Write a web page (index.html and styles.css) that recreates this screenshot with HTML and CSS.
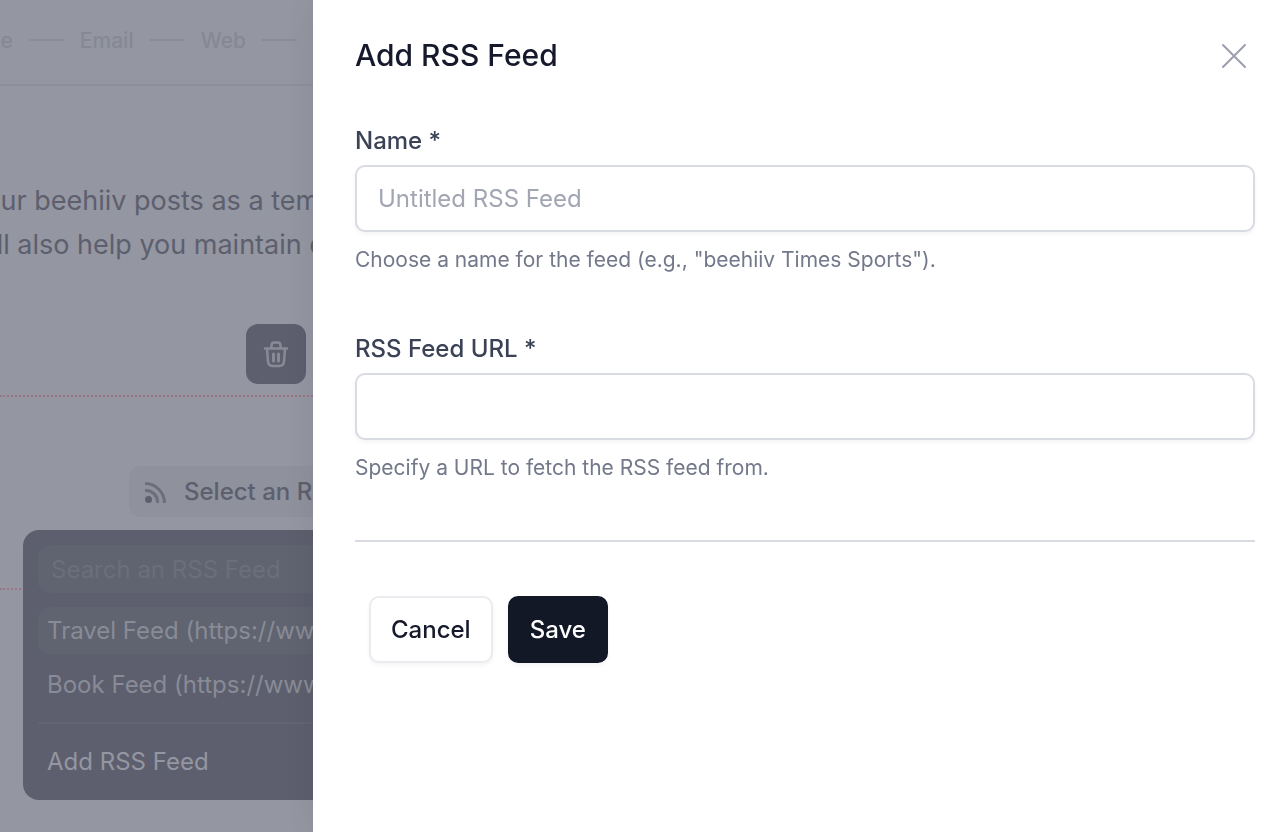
FILE: index.html
```html
<!DOCTYPE html>
<html lang="en">
  <head>
    <meta charset="UTF-8" />
    <meta name="viewport" content="width=device-width, initial-scale=1.0" />
    <title>Add RSS Feed</title>
    <link rel="stylesheet" href="styles.css">
  </head>
  <body>
    <div class="editor">
      <nav class="steps">
        <span>Audience</span>
        <span class="dash"></span>
        <span>Email</span>
        <span class="dash"></span>
        <span>Web</span>
        <span class="dash"></span>
      </nav>
      <div class="intro">
        <div>Your beehiiv posts as a template</div>
        <div>will also help you maintain consistency</div>
      </div>
      <div class="toolbar">
        <button class="delete" aria-label="Delete">
          <svg width="28" height="28" viewBox="0 0 28 28" fill="none" stroke="currentColor" stroke-width="2.500" stroke-linecap="round" stroke-linejoin="round">
            <path d="M3 8.500h22M9.500 8V5.500Q9.500 2.500 12.500 2.500h3Q18.500 2.500 18.500 5.500V8M5 9l1 12Q6.300 26 10.500 26h7Q21.700 26 22 21L23 9" />
            <path d="M11.500 14v7M16.500 14v7" stroke-width="3" />
          </svg>
        </button>
      </div>
      <div class="block">
        <button class="select-feed">
          <svg width="22" height="22" viewBox="0 0 22 22" fill="none" stroke="currentColor" stroke-width="3">
            <circle cx="3.500" cy="18.500" r="3.500" fill="currentColor" stroke="none" />
            <path d="M0 9.500A11.500 11.500 0 0 1 12.500 22M0 2.500A19.500 19.500 0 0 1 19.500 22" opacity="0.7" />
          </svg>
          <span>Select an RSS</span>
        </button>
        <div class="menu">
          <input class="search" type="text" placeholder="Search an RSS Feed" aria-label="Search an RSS Feed" />
          <button class="item active">Travel Feed (https://www</button>
          <button class="item">Book Feed (https://www</button>
          <hr />
          <button class="item add">Add RSS Feed</button>
        </div>
      </div>
    </div>

    <div class="drawer" role="dialog" aria-labelledby="drawer-title">
      <header>
        <h1 id="drawer-title">Add RSS Feed</h1>
        <button class="close" aria-label="Close">
          <svg width="26" height="26" viewBox="0 0 26 26" fill="none" stroke="currentColor" stroke-width="2" stroke-linecap="round">
            <path d="M2 2l22 22M24 2L2 24" />
          </svg>
        </button>
      </header>
      <form>
        <div class="field">
          <label for="name">Name *</label>
          <input type="text" id="name" placeholder="Untitled RSS Feed" />
          <p>Choose a name for the feed (e.g., "beehiiv Times Sports").</p>
        </div>
        <div class="field">
          <label for="url">RSS Feed URL *</label>
          <input type="text" id="url" />
          <p>Specify a URL to fetch the RSS feed from.</p>
        </div>
        <div class="actions">
          <button type="button" class="btn">Cancel</button>
          <button type="button" class="btn primary">Save</button>
        </div>
      </form>
    </div>
  </body>
</html>
```

FILE: styles.css
```css
* {
  box-sizing: border-box;
}
body {
  margin: 0;
  min-height: 100vh;
  background-color: #9496a1;
  font-family: Inter, "Liberation Sans", sans-serif;
  overflow: hidden;
}
button,
input {
  font: inherit;
}
button {
  border: none;
  cursor: pointer;
}
svg {
  display: block;
  flex-shrink: 0;
}

/* dimmed post editor */
.editor {
  width: 313px;
  min-height: 100vh;
  overflow: hidden;
  white-space: nowrap;
  color: #5d5f6e;
}
.steps {
  display: flex;
  align-items: center;
  justify-content: flex-end;
  gap: 16px;
  height: 86px;
  padding: 0 16px 4px 0;
  border-bottom: 2px solid #8d8f9b;
  font-size: 21px;
  font-weight: 500;
  color: #868894;
}
.dash {
  flex-shrink: 0;
  width: 35px;
  height: 2px;
  background-color: #8a8c98;
}
.intro {
  margin: 93px 0 0 -32px;
  font-size: 27px;
  line-height: 44px;
}
.toolbar {
  display: flex;
  justify-content: flex-end;
  padding: 57px 7px 11px 0;
}
.delete {
  display: flex;
  align-items: center;
  justify-content: center;
  width: 60px;
  height: 60px;
  padding: 0;
  border-radius: 12px;
  background-color: #5d5f6e;
  color: #888a96;
}
.block {
  position: relative;
  height: 195px;
  padding: 69px 0 0 129px;
  border: dotted #9c7485;
  border-width: 2px 0;
}
.select-feed {
  display: flex;
  align-items: center;
  gap: 17px;
  height: 51px;
  padding: 0 16px;
  border-radius: 12px;
  background-color: #8f919c;
  color: #5d5f6e;
  font-size: 24px;
  font-weight: 500;
}
.menu {
  position: absolute;
  top: 133px;
  left: 23px;
  display: flex;
  flex-direction: column;
  width: 480px;
  padding: 15px;
  border-radius: 16px;
  background-color: #5d5f6e;
  font-size: 24px;
}
.search {
  height: 48px;
  margin-bottom: 14px;
  padding: 0 13px;
  border: none;
  border-radius: 12px;
  background-color: #5f6470;
}
.search::placeholder {
  color: #6c6e7c;
  opacity: 1;
}
.item {
  height: 47px;
  margin-bottom: 7px;
  padding: 0 9px;
  border-radius: 12px;
  background: none;
  color: #898b96;
  text-align: left;
}
.item.active {
  background-color: #5f6470;
}
.menu hr {
  width: 100%;
  height: 2px;
  margin: 7px 0 14px;
  border: none;
  background-color: #626472;
}
.item.add {
  margin-bottom: 0;
  color: #9496a1;
}

/* drawer */
.drawer {
  position: fixed;
  top: 0;
  right: 0;
  bottom: 0;
  left: 313px;
  padding: 35px 25px 35px 42px;
  background-color: #fff;
  box-shadow: 0 0 30px rgba(17, 24, 39, 0.08);
}
header {
  display: flex;
  align-items: center;
  justify-content: space-between;
  margin-bottom: 48px;
}
h1 {
  margin: 0;
  font-size: 30px;
  font-weight: 500;
  line-height: 41px;
  color: #15192b;
}
.close {
  margin-right: 8px;
  padding: 0;
  background: none;
  color: #9ca0ae;
}
.field {
  margin-bottom: 58px;
}
label {
  display: block;
  margin-bottom: 7px;
  font-size: 24px;
  font-weight: 500;
  line-height: 34px;
  color: #3b4256;
}
.field input {
  display: block;
  width: 100%;
  height: 67px;
  padding: 0 21px;
  border: 2px solid #d9dbe2;
  border-radius: 10px;
  background-color: #fff;
  box-shadow: 0 2px 4px rgba(0, 0, 0, 0.05);
  font-size: 24px;
  color: #15192b;
}
.field input::placeholder {
  color: #a2a6b3;
  opacity: 1;
}
.field p {
  margin: 14px 0 0;
  font-size: 21px;
  line-height: 28px;
  color: #73788a;
}
.actions {
  display: flex;
  gap: 15px;
  padding: 54px 14px;
  border-top: 2px solid #d8dae1;
}
.btn {
  height: 67px;
  padding: 0 20px;
  border: 2px solid #ebecef;
  border-radius: 10px;
  background-color: #fff;
  box-shadow: 0 2px 4px rgba(0, 0, 0, 0.05);
  font-size: 24px;
  font-weight: 500;
  color: #15192b;
}
.btn.primary {
  border-color: #131827;
  background-color: #131827;
  color: #fff;
}
```
